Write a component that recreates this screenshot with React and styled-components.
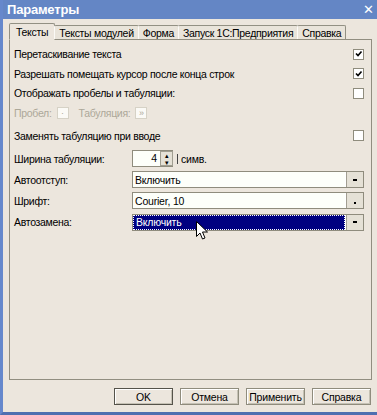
import styled, { createGlobalStyle } from "styled-components"

const GlobalStyle = createGlobalStyle`
    html, body {
        margin: 0;
        padding: 0;
        background: #ece6dd;
    }
    * {
        box-sizing: border-box;
    }
`

const tabs = ["Тексты", "Тексты модулей", "Форма", "Запуск 1С:Предприятия", "Справка"]
const buttons = ["OK", "Отмена", "Применить", "Справка"]

export default function App(){
    return (
        <Window>
            <GlobalStyle />
            <TitleBar>
                <Title>Параметры</Title>
                <Close>✕</Close>
            </TitleBar>
            <Body>
                <Tabs>
                    {tabs.map((t, i) => (
                        <Tab key={t} active={i === 0}>{t}</Tab>
                    ))}
                </Tabs>
                <Panel>
                    <Row h={20}>
                        <Label wide>Перетаскивание текста</Label>
                        <Check checked />
                    </Row>
                    <Row h={19}>
                        <Label wide>Разрешать помещать курсор после конца строк</Label>
                        <Check checked />
                    </Row>
                    <Row h={20}>
                        <Label wide>Отображать пробелы и табуляции:</Label>
                        <Check />
                    </Row>
                    <Row h={20}>
                        <Muted>Пробел:</Muted>
                        <SymbolBox>·</SymbolBox>
                        <Muted>Табуляция:</Muted>
                        <SymbolBox>»</SymbolBox>
                    </Row>
                    <Row h={25}>
                        <Label wide>Заменять табуляцию при вводе</Label>
                        <Check />
                    </Row>
                    <Row h={21}>
                        <Label>Ширина табуляции:</Label>
                        <Spin>
                            <SpinValue>4</SpinValue>
                            <SpinButtons>
                                <SpinArrow>▴</SpinArrow>
                                <SpinArrow>▾</SpinArrow>
                            </SpinButtons>
                        </Spin>
                        <Unit>симв.</Unit>
                    </Row>
                    <Row h={21}>
                        <Label>Автоотступ:</Label>
                        <Combo value="Включить" />
                    </Row>
                    <Row h={21}>
                        <Label>Шрифт:</Label>
                        <Combo value="Courier, 10" dots />
                    </Row>
                    <Row h={22}>
                        <Label>Автозамена:</Label>
                        <Combo value="Включить" selected />
                        <Cursor viewBox="0 0 12 19" width="12" height="19">
                            <path d="M0.5 0.5 L0.5 15.5 L4 12 L6.5 18 L9 17 L6.5 11 L11.5 11 Z" fill="#fff" stroke="#000" strokeWidth="1" />
                        </Cursor>
                    </Row>
                </Panel>
                <ButtonBar>
                    {buttons.map((b, i) => (
                        <Button key={b} primary={i === 0}>{b}</Button>
                    ))}
                </ButtonBar>
            </Body>
        </Window>
    )
}

function Check({ checked }){
    return (
        <CheckBox>
            {checked && (
                <svg width="8" height="8" viewBox="0 0 8 8">
                    <path d="M1 3.5 L3 5.5 L6.5 1.5" fill="none" stroke="#000" strokeWidth="1.6" />
                </svg>
            )}
        </CheckBox>
    )
}

function Combo({ value, selected, dots }){
    return (
        <ComboBox>
            <ComboField selected={selected}>
                <ComboText selected={selected}>{value}</ComboText>
            </ComboField>
            <ComboButton>
                <ComboGlyph dots={dots} />
            </ComboButton>
        </ComboBox>
    )
}

const Window = styled.div`
    width: 377px;
    height: 415px;
    display: flex;
    flex-direction: column;
    background: #ece6dd;
    border-left: 3px solid #6688cc;
    border-bottom: 3px solid #4f6fb0;
    font-family: "Liberation Sans", Arial, sans-serif;
    font-size: 10.5px;
    color: #000;
    overflow: hidden;
`

const TitleBar = styled.div`
    height: 19px;
    flex-shrink: 0;
    margin-left: -3px;
    display: flex;
    align-items: center;
    justify-content: space-between;
    padding: 0 3px 0 7px;
    background: #6486c5;
    color: #fff;
`

const Title = styled.span`
    font-family: "Liberation Sans", Arial, sans-serif;
    font-weight: bold;
    font-size: 13px;
    letter-spacing: -0.2px;
`

const Close = styled.span`
    font-family: "DejaVu Sans", sans-serif;
    font-weight: bold;
    font-size: 13px;
`

const Body = styled.div`
    flex: 1;
    display: flex;
    flex-direction: column;
    padding: 3px 5px 0 6px;
`

const Tabs = styled.div`
    display: flex;
    align-items: flex-end;
    height: 17px;
    position: relative;
    z-index: 1;
`

const Tab = styled.div`
    height: ${p => p.active ? "17px" : "14px"};
    padding: 0 ${p => p.active ? "6px" : "4px"};
    display: flex;
    align-items: center;
    flex-shrink: 0;
    border: 1px solid #929083;
    border-bottom: ${p => p.active ? "1px solid #ece6dd" : "none"};
    border-left-color: ${p => p.active ? "#929083" : "#fbfaf6"};
    margin-right: -1px;
    background: ${p => p.active ? "#ece6dd" : "#e9e4da"};
    border-radius: 2px 2px 0 0;
    white-space: nowrap;
    letter-spacing: -0.3px;
    margin-bottom: ${p => p.active ? "-1px" : "0"};
`

const Panel = styled.div`
    height: 341px;
    flex-shrink: 0;
    border: 1px solid #918e80;
    display: flex;
    flex-direction: column;
    padding: 4px 6px 0 4px;
`

const Row = styled.div`
    height: ${p => p.h}px;
    display: flex;
    align-items: center;
    position: relative;
`

const Label = styled.span`
    ${p => p.wide ? "flex: 1;" : "width: 118px;"}
    white-space: nowrap;
    letter-spacing: -0.3px;
`

const Muted = styled.span`
    color: #aca899;
    margin-right: 5px;
    white-space: nowrap;
    letter-spacing: -0.3px;
`

const SymbolBox = styled.span`
    width: 12px;
    height: 12px;
    background: #fbfaf6;
    border: 1px solid #d6d2c6;
    color: #aca899;
    display: flex;
    align-items: center;
    justify-content: center;
    font-size: 9px;
    margin-right: 10px;
`

const CheckBox = styled.span`
    width: 11px;
    height: 11px;
    border: 1px solid #8f8c7d;
    background: #fff;
    display: flex;
    align-items: center;
    justify-content: center;
    margin-right: 1px;
`

const Spin = styled.div`
    display: flex;
    height: 17px;
    width: 41px;
    border: 1px solid #8f8c7d;
    border-right: none;
    background: #fdfffa;
`

const SpinValue = styled.span`
    flex: 1;
    text-align: right;
    padding-right: 3px;
    line-height: 15px;
`

const SpinButtons = styled.div`
    width: 13px;
    display: flex;
    flex-direction: column;
    background: #e5e1d6;
    border: 1px solid #a19e91;
`

const SpinArrow = styled.span`
    flex: 1;
    font-size: 7px;
    line-height: 7px;
    text-align: center;
`

const Unit = styled.span`
    margin-left: 4px;
    padding-left: 3px;
    border-left: 1px solid #444;
    line-height: 10px;
    letter-spacing: -0.2px;
`

const ComboBox = styled.div`
    display: flex;
    width: 232px;
    height: 17px;
    border: 1px solid #8f8c7d;
`

const ComboField = styled.div`
    flex: 1;
    display: flex;
    align-items: center;
    background: ${p => p.selected ? "#000080" : "#fdfffa"};
    border-right: 1px solid #fff;
    padding: ${p => p.selected ? "1px" : "0"};
`

const ComboText = styled.span`
    flex: 1;
    height: 100%;
    display: flex;
    align-items: center;
    padding-left: 2px;
    color: ${p => p.selected ? "#fff" : "#000"};
    outline: ${p => p.selected ? "1px dotted #fff" : "none"};
    letter-spacing: -0.2px;
`

const ComboButton = styled.div`
    width: 17px;
    background: #e5e1d6;
    border-left: 1px solid #a19e91;
    display: flex;
    align-items: center;
    justify-content: center;
`

const ComboGlyph = styled.span`
    width: ${p => p.dots ? "2px" : "4px"};
    height: 2px;
    background: #000;
    margin-top: ${p => p.dots ? "5px" : "0"};
`

const Cursor = styled.svg`
    position: absolute;
    left: 182px;
    top: 10px;
`

const ButtonBar = styled.div`
    display: flex;
    justify-content: flex-end;
    gap: 7px;
    padding: 8px 1px 0 0;
`

const Button = styled.div`
    width: 59px;
    height: 17px;
    flex-shrink: 0;
    display: flex;
    align-items: center;
    justify-content: center;
    background: #ece6dd;
    border: 1px solid ${p => p.primary ? "#55534a" : "#8f8c7d"};
    box-shadow: inset 1px 1px 0 #fff, inset -1px -1px 0 #c5c1b4;
    letter-spacing: -0.2px;
`
